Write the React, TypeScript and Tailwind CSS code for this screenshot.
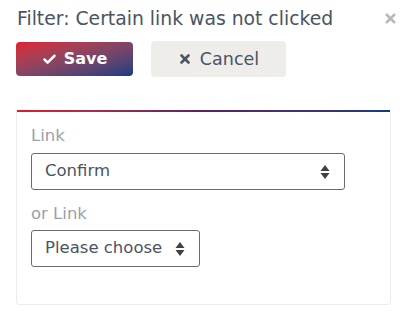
import { Check, X } from "lucide-react";

function SortArrows() {
  return (
    <svg width="10" height="16" viewBox="0 0 10 16" className="text-[#3f3f46]">
      <path d="M5 1 L9.5 7 H0.5 Z" fill="currentColor" />
      <path d="M5 15 L9.5 9 H0.5 Z" fill="currentColor" />
    </svg>
  );
}

function Select({ value, className }: { value: string; className: string }) {
  return (
    <div
      className={`flex h-[37px] items-center justify-between rounded-[3px] border border-[#6b6b6b] bg-white pl-[13px] pr-[14px] text-[16.5px] text-[#4a5463] ${className}`}
    >
      <span>{value}</span>
      <SortArrows />
    </div>
  );
}

export default function App() {
  return (
    <div
      className="h-[319px] w-[409px] bg-white"
      style={{ fontFamily: '"DejaVu Sans", Verdana, sans-serif' }}
    >
      {/* Header */}
      <div className="flex items-center justify-between pl-[17px] pr-[11px] pt-[5px]">
        <h1 className="text-[18.8px] leading-[27px] text-[#4a5463]">
          Filter: Certain link was not clicked
        </h1>
        <X className="h-[15px] w-[15px] text-[#b3b8c0]" strokeWidth={4} />
      </div>

      {/* Actions */}
      <div className="mt-[9px] flex items-center gap-[18px] pl-[16px]">
        <button className="flex h-[34px] w-[117px] items-center justify-center gap-[7px] rounded-[4px] bg-gradient-to-br from-[#e11a2e] to-[#143a82] text-[16px] font-bold text-white">
          <Check className="h-[15px] w-[15px]" strokeWidth={4} />
          Save
        </button>
        <button className="flex h-[36px] w-[135px] items-center justify-center gap-[8px] rounded-[4px] bg-[#eeedea] text-[17.5px] text-[#4a5463]">
          <X className="h-[14px] w-[14px]" strokeWidth={4.5} />
          Cancel
        </button>
      </div>

      {/* Card */}
      <div className="ml-[16px] mt-[33px] w-[375px] rounded-b-[4px] border border-t-0 border-[#ececec]">
        <div className="h-[2px] bg-gradient-to-r from-[#e11a2e] via-[#5a2360] to-[#143a82]" />
        <div className="px-[14px] pb-[37px] pt-[12px]">
          <div className="text-[16.5px] leading-[24px] text-[#9aa0a8]">Link</div>
          <Select value="Confirm" className="mt-[5px] w-[314px]" />
          <div className="mt-[12px] text-[16.5px] leading-[24px] text-[#9aa0a8]">or Link</div>
          <Select value="Please choose" className="mt-[4px] w-[169px] pr-[10px]" />
        </div>
      </div>
    </div>
  );
}
